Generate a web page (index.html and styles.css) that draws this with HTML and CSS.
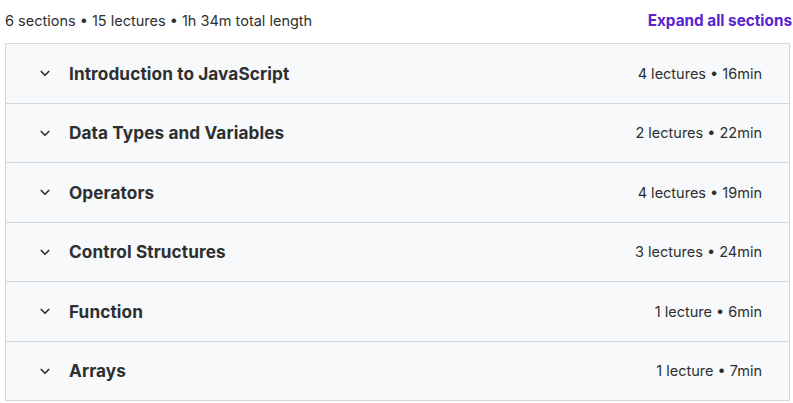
FILE: index.html
```html
<!DOCTYPE html>
<html lang="en">
<head>
    <meta charset="UTF-8">
    <meta name="viewport" content="width=device-width, initial-scale=1.0">
    <title>Course content</title>
    <link rel="stylesheet" href="styles.css">
</head>
<body>
    <div class="curriculum">
        <div class="summary">
            <span>6 sections • 15 lectures • 1h 34m total length</span>
            <button type="button" class="expand-all">Expand all sections</button>
        </div>
        <div class="sections">
            <div class="section">
                <svg class="chevron" viewBox="0 0 24 24"><path d="M7 10l5 5 5-5"/></svg>
                <span class="section-title">Introduction to JavaScript</span>
                <span class="section-meta">4 lectures • 16min</span>
            </div>
            <div class="section">
                <svg class="chevron" viewBox="0 0 24 24"><path d="M7 10l5 5 5-5"/></svg>
                <span class="section-title">Data Types and Variables</span>
                <span class="section-meta">2 lectures • 22min</span>
            </div>
            <div class="section">
                <svg class="chevron" viewBox="0 0 24 24"><path d="M7 10l5 5 5-5"/></svg>
                <span class="section-title">Operators</span>
                <span class="section-meta">4 lectures • 19min</span>
            </div>
            <div class="section">
                <svg class="chevron" viewBox="0 0 24 24"><path d="M7 10l5 5 5-5"/></svg>
                <span class="section-title">Control Structures</span>
                <span class="section-meta">3 lectures • 24min</span>
            </div>
            <div class="section">
                <svg class="chevron" viewBox="0 0 24 24"><path d="M7 10l5 5 5-5"/></svg>
                <span class="section-title">Function</span>
                <span class="section-meta">1 lecture • 6min</span>
            </div>
            <div class="section">
                <svg class="chevron" viewBox="0 0 24 24"><path d="M7 10l5 5 5-5"/></svg>
                <span class="section-title">Arrays</span>
                <span class="section-meta">1 lecture • 7min</span>
            </div>
        </div>
    </div>
</body>
</html>
```

FILE: styles.css
```css
body {
    margin: 0;
    font-family: Inter, "Noto Sans", sans-serif;
    color: #2d2f31;
    background-color: #fff;
}

.curriculum {
    padding: 8px 1px 0 5px;
}

.summary {
    display: flex;
    justify-content: space-between;
    align-items: center;
    height: 24px;
    margin-bottom: 11px;
    font-size: 14.5px;
    color: #2d2f31;
}

.expand-all {
    background: none;
    border: none;
    padding: 0;
    font-family: inherit;
    font-size: 15.3px;
    font-weight: 700;
    color: #5624d0;
    cursor: pointer;
}

.sections {
    border: 1px solid #d1d7dc;
    margin-right: 2px;
}

.section {
    display: flex;
    align-items: center;
    height: 58.5px;
    padding: 0 27px 0 30px;
    background-color: #f7f9fa;
    border-bottom: 1px solid #d1d7dc;
}

.section:last-child {
    border-bottom: none;
}

.chevron {
    width: 18px;
    height: 18px;
    fill: none;
    stroke: #2d2f31;
    stroke-width: 2.2;
    stroke-linecap: round;
    stroke-linejoin: round;
    margin-right: 15px;
}

.section-title {
    flex: 1;
    font-size: 17.2px;
    font-weight: 700;
    letter-spacing: 0.1px;
}

.section-meta {
    font-size: 14.5px;
}
```
